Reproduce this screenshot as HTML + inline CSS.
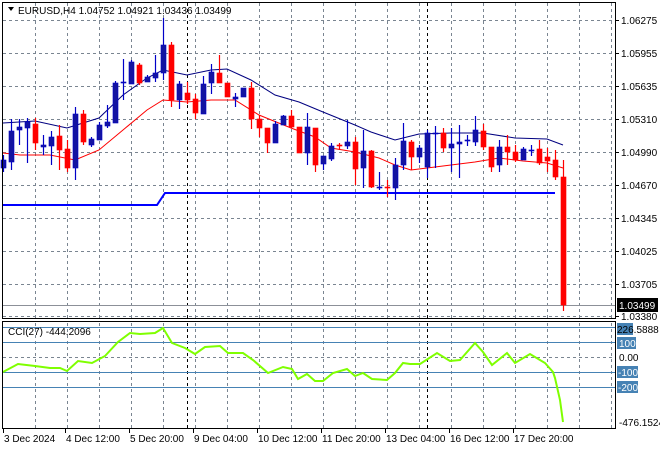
<!DOCTYPE html>
<html><head><meta charset="utf-8"><style>
html,body{margin:0;padding:0;background:#fff;width:660px;height:450px;overflow:hidden}
svg{display:block}
text{font-family:"Liberation Sans",sans-serif;font-size:10px;fill:#000}
</style></head><body>
<svg id="s" width="660" height="450" xmlns="http://www.w3.org/2000/svg">
<rect width="660" height="450" fill="#fff"/>
<g id="grid" stroke="#7a8591" stroke-dasharray="3,3" stroke-width="1"></g>
<g stroke="#000" stroke-dasharray="3,3" stroke-width="1">
<line x1="187.5" y1="3" x2="187.5" y2="318"/><line x1="427.5" y1="3" x2="427.5" y2="318"/>
<line x1="187.5" y1="323" x2="187.5" y2="428"/><line x1="427.5" y1="323" x2="427.5" y2="428"/>
</g>
<g stroke="#4682b4" stroke-width="1">
<line x1="3" y1="327.5" x2="615" y2="327.5"/><line x1="3" y1="342.5" x2="615" y2="342.5"/>
<line x1="3" y1="372.5" x2="615" y2="372.5"/><line x1="3" y1="387.5" x2="615" y2="387.5"/>
</g>
<line x1="3" y1="305.5" x2="615" y2="305.5" stroke="#8c9098"/>
<polyline fill="none" stroke="#0000ff" stroke-width="2" points="3,205 157,205 165,193 555,193"/>
<polyline fill="none" stroke="#000080" stroke-width="1" points="3,123 35,121 67,128 99,118 123,95 147,78 163,70 187,75 211,70 227,69 251,80 275,95 299,102 323,112 355,125 371,132 395,140 419,134 451,133 483,133 515,138 547,139 563,145"/>
<polyline fill="none" stroke="#ff0000" stroke-width="1" points="3,153 20,155 50,155 75,160 99,150 123,130 147,110 163,100 187,102 211,100 235,100 259,115 291,128 315,137 331,148 355,152 379,158 395,165 411,170 427,168 451,165 475,162 499,158 523,161 547,163 563,168"/>
<g id="candles"></g>
<polyline fill="none" stroke="#7fff00" stroke-width="2" points="3,372 18,364 35,366 50,368 60,368 67,371 78,361 92,363 105,356 118,342 130,333 140,334 155,333 163,328 172,343 185,348 195,354 205,347 220,346 228,353 243,353 253,360 268,373 283,367 292,369 298,379 307,374 315,381 323,381 333,373 347,369 355,376 363,373 372,379 387,380 395,373 403,363 410,364 420,364 437,353 450,361 460,360 475,343 483,352 492,365 507,353 515,363 530,354 545,363 553,372 555,378 560,400 563,422"/>
<g fill="none" stroke="#000" stroke-width="1">
<rect x="2.5" y="2.5" width="613" height="316"/>
<rect x="2.5" y="321.5" width="613" height="107"/>
</g>
<path d="M8 7 L14 7 L11 11 Z" fill="#000"/>
<text x="18" y="14">EURUSD,H4  1.04752 1.04921 1.03436 1.03499</text>
<text x="8" y="335">CCI(27) -444.2096</text>
<g id="ax"></g>
<rect x="617" y="298" width="41" height="14" fill="#000"/>
<text x="619" y="309" style="fill:#fff">1.03499</text>
<rect x="617" y="323" width="16" height="12" fill="#4682b4"/>
<text x="617" y="333">226.5888</text>
<rect x="617" y="337" width="19" height="12" fill="#4682b4"/><text x="619" y="347" style="fill:#fff">100</text>
<text x="619" y="361">0.00</text>
<rect x="617" y="366" width="21" height="12" fill="#4682b4"/><text x="618" y="376" style="fill:#fff">-100</text>
<rect x="617" y="381" width="21" height="12" fill="#4682b4"/><text x="618" y="391" style="fill:#fff">-200</text>
<text x="619" y="426">-476.1524</text>
</svg>
<script>
var NS="http://www.w3.org/2000/svg";
function el(p,t,a,tx){var e=document.createElementNS(NS,t);for(var k in a)e.setAttribute(k,a[k]);if(tx)e.textContent=tx;p.appendChild(e);return e;}
var g=document.getElementById("grid");
for(var x=35;x<615;x+=32){if(x==187||x==427)continue;el(g,"line",{x1:x+.5,y1:3,x2:x+.5,y2:318});el(g,"line",{x1:x+.5,y1:323,x2:x+.5,y2:428});}
var hy=[20,53,86,119,152,185,218,251,284,316];
hy.forEach(function(y){el(g,"line",{x1:3,y1:y+.5,x2:615,y2:y+.5});});
el(g,"line",{x1:3,y1:357.5,x2:615,y2:357.5});
var ax=document.getElementById("ax");
var lab=["1.06275","1.05955","1.05635","1.05310","1.04990","1.04670","1.04345","1.04025","1.03705","1.03380"];
hy.forEach(function(y,i){el(ax,"line",{x1:615,y1:y+.5,x2:619,y2:y+.5,stroke:"#000"});el(ax,"text",{x:621,y:y+4},lab[i]);});
var tl=[[4,"3 Dec 2024"],[66,"4 Dec 12:00"],[130,"5 Dec 20:00"],[194,"9 Dec 04:00"],[258,"10 Dec 12:00"],[322,"11 Dec 20:00"],[386,"13 Dec 04:00"],[450,"16 Dec 12:00"],[514,"17 Dec 20:00"]];
tl.forEach(function(t){el(ax,"line",{x1:t[0]-0.5,y1:428,x2:t[0]-0.5,y2:433,stroke:"#000"});el(ax,"text",{x:t[0],y:442},t[1]);});
var d=[[168,160,155,172],[162,131,119,170],[130,127,119,145],[128,122,118,163],[124,143,118,150],[147,145,135,155],[146,137,131,165],[136,150,125,170],[149,168,140,172],[168,114,107,180],[114,142,110,145],[145,139,137,147],[140,125,122,140],[126,122,105,128],[123,83,81,123],[83,82,59,100],[84,62,60,84],[65,83,63,85],[82,77,75,82],[78,73,55,82],[73,45,18,80],[45,100,42,107],[100,84,81,109],[93,100,82,104],[99,113,94,119],[114,84,76,114],[83,72,64,94],[73,83,55,83],[83,97,83,97],[99,97,93,107],[97,88,88,97],[88,119,82,129],[119,128,115,137],[128,143,128,153],[143,124,121,143],[125,116,115,125],[116,127,110,128],[127,153,127,153],[153,127,113,165],[128,165,128,172],[164,156,156,170],[159,146,143,161],[145,146,143,150],[146,142,120,149],[142,169,137,185],[168,151,130,188],[151,187,150,188],[188,187,172,190],[187,188,180,197],[188,165,158,200],[165,141,123,170],[142,157,140,170],[157,148,145,163],[167,133,130,178],[134,133,126,168],[133,148,128,152],[148,144,128,172],[144,142,125,178],[141,140,135,146],[142,130,116,146],[131,147,124,150],[147,167,147,172],[165,147,140,172],[147,152,135,165],[152,160,145,162],[160,149,147,160],[151,150,145,156],[149,163,140,165],[157,161,148,172],[160,177,150,180],[177,305,160,311]];
var c=document.getElementById("candles");
d.forEach(function(k,i){var x=3+8*i,o=k[0],cl=k[1],up=cl<o,col=up?"#0000c8":"#ff0000";var fc=up?"#1414a0":"#ff0000";
el(c,"line",{x1:x+.5,y1:k[2],x2:x+.5,y2:k[3],stroke:col,"stroke-width":1.2});
var t=Math.min(o,cl),h=Math.max(Math.abs(o-cl),1);el(c,"rect",{x:x-2,y:t,width:5,height:h,fill:fc,stroke:col,"stroke-width":0.6});});
</script>
</body></html>
